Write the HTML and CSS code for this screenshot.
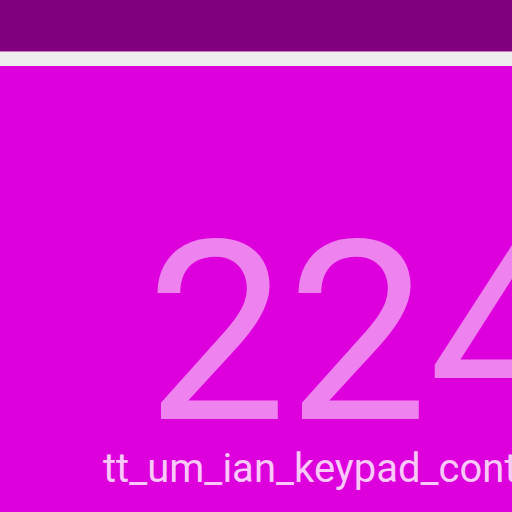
FILE: index.html
```html
<!DOCTYPE html>
<html>
<head>
<meta charset="utf-8">
<link rel="stylesheet" href="styles.css">
</head>
<body>
<header class="topbar"></header>
<div class="strip"></div>
<main class="stage">
  <div class="value">224</div>
  <div class="label">tt_um_ian_keypad_controller</div>
</main>
</body>
</html>
```
FILE: styles.css
```css
html, body {
  margin: 0;
  padding: 0;
  width: 512px;
  height: 512px;
  overflow: hidden;
  background: #dd00dd;
  font-family: Roboto, "Liberation Sans", sans-serif;
}
.topbar {
  height: 52px;
  background: #800080;
  border-bottom: 1px solid #c080c0;
  box-sizing: border-box;
}
.strip {
  height: 14px;
  background: #eeeeee;
}
.stage {
  display: flex;
  flex-direction: column;
  padding-top: 167px;
  gap: 16px;
  white-space: nowrap;
}
.value {
  font-size: 251px;
  line-height: 200px;
  color: #ee82ee;
  padding-left: 146px;
}
.label {
  font-size: 40px;
  line-height: 40px;
  color: #f8c8f8;
  padding-left: 103px;
}
```
